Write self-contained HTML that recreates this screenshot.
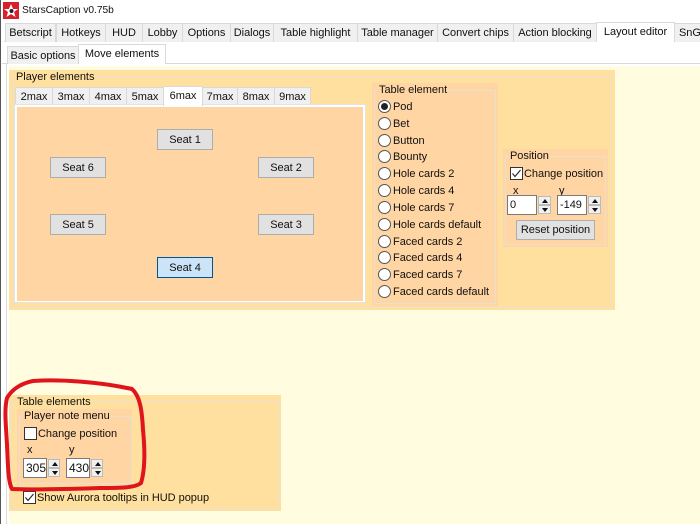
<!DOCTYPE html>
<html><head><meta charset="utf-8"><style>
html,body{margin:0;padding:0;background:#fff}
#r{position:relative;width:700px;height:524px;overflow:hidden;background:#fff;font:11px/14px "Liberation Sans",sans-serif;color:#111;letter-spacing:-.03px}
#r div{position:absolute;box-sizing:border-box;white-space:nowrap}
.t{background:#f0f0f0;border:1px solid #d9d9d9;border-bottom:0;text-align:center;height:19px;top:23px;line-height:19px}
.s{background:#f0f0f0;border:1px solid #d9d9d9;border-bottom:0;text-align:center;height:18px;top:87px;line-height:18px}
.b{background:#e1e1e1;border:1px solid #adadad;text-align:center;width:56px;height:21px;line-height:21px}
.rd{width:13px;height:13px;border:1px solid #555;border-radius:50%;background:#fff;left:378px}
.l{left:393px}
.g{border:1px solid #e9e0cf}
.cb{width:13px;height:13px;border:1px solid #333;background:#fff}
.in{background:#fff;border:1px solid #7a7a7a;line-height:18px;padding-left:2px}
.sp{width:13px;height:9px;background:#f0f0f0;border:1px solid #bbb;font-size:0}
.sp:after{content:"";position:absolute;left:3px;border:3px solid transparent}
.u:after{border-bottom:4px solid #111;border-top:0;top:2px}
.d:after{top:2px;border-top:4px solid #111;border-bottom:0}
</style></head><body><div id="r">
<div style="left:0;top:0;width:1px;height:524px;background:#555"></div>
<svg style="position:absolute;left:3px;top:2px" width="16" height="17"><rect width="16" height="17" fill="#d8202a"/><polygon points="8,2 10,7 15,7 11,10 12.500,15 8,12 3.500,15 5,10 1,7 6,7" fill="#fff"/><circle cx="8.500" cy="9" r="2" fill="#222"/></svg>
<div style="left:22px;top:3px;line-height:15px;font-size:10.2px">StarsCaption v0.75b</div>

<div style="left:2px;top:63px;width:698px;height:1px;background:#d9d9d9"></div>
<div style="left:4px;top:41px;width:696px;height:1px;background:#d9d9d9"></div>
<div class="t" style="left:5px;width:51px">Betscript</div>
<div class="t" style="left:56px;width:50px">Hotkeys</div>
<div class="t" style="left:105px;width:38px">HUD</div>
<div class="t" style="left:142px;width:41px">Lobby</div>
<div class="t" style="left:182px;width:49px">Options</div>
<div class="t" style="left:230px;width:44px">Dialogs</div>
<div class="t" style="left:273px;width:85px">Table highlight</div>
<div class="t" style="left:357px;width:81px">Table manager</div>
<div class="t" style="left:437px;width:77px">Convert chips</div>
<div class="t" style="left:513px;width:84px">Action blocking</div>
<div class="t" style="left:596px;width:79px;top:22px;height:20px;background:#fff;line-height:19px">Layout editor</div>
<div class="t" style="left:674px;width:30px;text-align:left;padding-left:4px">SnG</div>

<div class="t" style="left:7px;top:46px;width:72px;height:18px;line-height:18px">Basic options</div>
<div class="t" style="left:78px;top:44px;width:88px;height:20px;background:#fff;line-height:19px">Move elements</div>

<div style="left:9px;top:66px;width:691px;height:458px;background:#fffcdf"></div>
<div style="left:6px;top:64px;width:1px;height:460px;background:#dcdcdc"></div>

<div style="left:9px;top:70px;width:606px;height:240px;background:#ffe09e"></div>
<div class="g" style="left:12px;top:77px;width:600px;height:230px"></div>
<div style="left:15px;top:70px;background:#ffe09e;padding:0 1px">Player elements</div>

<div class="s" style="left:15px;width:38px">2max</div>
<div class="s" style="left:52px;width:38px">3max</div>
<div class="s" style="left:89px;width:38px">4max</div>
<div class="s" style="left:126px;width:38px">5max</div>
<div class="s" style="left:163px;width:40px;top:86px;height:20px;background:#fff;z-index:2">6max</div>
<div class="s" style="left:202px;width:36px">7max</div>
<div class="s" style="left:237px;width:38px">8max</div>
<div class="s" style="left:274px;width:37px">9max</div>

<div style="left:14px;top:104px;width:352px;height:199px;background:#fff;border:1px solid #e3e3e3"></div>
<div style="left:17px;top:107px;width:346px;height:194px;background:#ffd5a3"></div>
<div class="b" style="left:157px;top:129px">Seat 1</div>
<div class="b" style="left:50px;top:157px">Seat 6</div>
<div class="b" style="left:258px;top:157px">Seat 2</div>
<div class="b" style="left:50px;top:214px">Seat 5</div>
<div class="b" style="left:258px;top:214px">Seat 3</div>
<div class="b" style="left:157px;top:257px;background:#cce4f7;border-color:#005499">Seat 4</div>

<div style="left:372px;top:83px;width:126px;height:223px;background:#ffd5a3"></div>
<div class="g" style="left:374px;top:90px;width:122px;height:214px"></div>
<div style="left:378px;top:83px;background:#ffd5a3;padding:0 1px">Table element</div>
<div class="rd" style="top:100px"></div><div style="left:381px;top:103px;width:7px;height:7px;border-radius:50%;background:#222"></div><div class="l" style="top:100px">Pod</div>
<div class="rd" style="top:117px"></div><div class="l" style="top:117px">Bet</div>
<div class="rd" style="top:134px"></div><div class="l" style="top:134px">Button</div>
<div class="rd" style="top:150px"></div><div class="l" style="top:150px">Bounty</div>
<div class="rd" style="top:167px"></div><div class="l" style="top:167px">Hole cards 2</div>
<div class="rd" style="top:184px"></div><div class="l" style="top:184px">Hole cards 4</div>
<div class="rd" style="top:201px"></div><div class="l" style="top:201px">Hole cards 7</div>
<div class="rd" style="top:218px"></div><div class="l" style="top:218px">Hole cards default</div>
<div class="rd" style="top:235px"></div><div class="l" style="top:235px">Faced cards 2</div>
<div class="rd" style="top:251px"></div><div class="l" style="top:251px">Faced cards 4</div>
<div class="rd" style="top:268px"></div><div class="l" style="top:268px">Faced cards 7</div>
<div class="rd" style="top:285px"></div><div class="l" style="top:285px">Faced cards default</div>

<div style="left:503px;top:149px;width:105px;height:98px;background:#ffd5a3"></div>
<div class="g" style="left:505px;top:156px;width:101px;height:89px"></div>
<div style="left:509px;top:149px;background:#ffd5a3;padding:0 1px">Position</div>
<div class="cb" style="left:510px;top:167px"></div>
<svg style="position:absolute;left:510px;top:167px" width="13" height="13"><path d="M2.500 6.500L5 9.500L10.500 3" fill="none" stroke="#222" stroke-width="1.100"/></svg>
<div style="left:524px;top:167px">Change position</div>
<div style="left:513px;top:184px">x</div><div style="left:559px;top:184px">y</div>
<div class="in" style="left:507px;top:195px;width:30px;height:20px">0</div>
<div class="sp u" style="left:538px;top:196px"></div><div class="sp d" style="left:538px;top:205px"></div>
<div class="in" style="left:557px;top:195px;width:30px;height:20px">-149</div>
<div class="sp u" style="left:588px;top:196px"></div><div class="sp d" style="left:588px;top:205px"></div>
<div class="b" style="left:516px;top:220px;width:79px;height:20px;line-height:19px">Reset position</div>

<div style="left:9px;top:395px;width:272px;height:116px;background:#ffe09e"></div>
<div class="g" style="left:11px;top:401px;width:268px;height:108px"></div>
<div style="left:16px;top:395px;background:#ffe09e;padding:0 1px">Table elements</div>
<div style="left:17px;top:409px;width:115px;height:76px;background:#ffd5a3"></div>
<div class="g" style="left:19px;top:416px;width:113px;height:68px"></div>
<div style="left:23px;top:409px;background:#ffd5a3;padding:0 1px">Player note menu</div>
<div class="cb" style="left:24px;top:427px"></div>
<div style="left:38px;top:427px">Change position</div>
<div style="left:27px;top:443px">x</div><div style="left:69px;top:443px">y</div>
<div class="in" style="left:23px;top:458px;width:24px;height:20px;padding-left:2px;letter-spacing:0;font-size:12px">305</div>
<div class="sp u" style="left:48px;top:459px;width:12px"></div><div class="sp d" style="left:48px;top:468px;width:12px"></div>
<div class="in" style="left:66px;top:458px;width:24px;height:20px;padding-left:2px;letter-spacing:0;font-size:12px">430</div>
<div class="sp u" style="left:91px;top:459px;width:12px"></div><div class="sp d" style="left:91px;top:468px;width:12px"></div>
<div class="cb" style="left:23px;top:491px"></div>
<svg style="position:absolute;left:23px;top:491px" width="13" height="13"><path d="M2.500 6.500L5 9.500L10.500 3" fill="none" stroke="#222" stroke-width="1.100"/></svg>
<div style="left:37px;top:491px">Show Aurora tooltips in HUD popup</div>

<svg style="position:absolute;left:0;top:370px" width="160" height="130" fill="none"><path d="M33 11C60 9 100 12 132 19C140 26 142 40 143 60C145 80 145 100 141 113C135 118 120 118 100 118C70 119 35 120 12 119C8 112 8 95 7 75C6 55 4 40 7 28C12 19 22 13 33 11Z" stroke="#e0141c" stroke-width="4" stroke-linejoin="round"/></svg>
</div></body></html>
